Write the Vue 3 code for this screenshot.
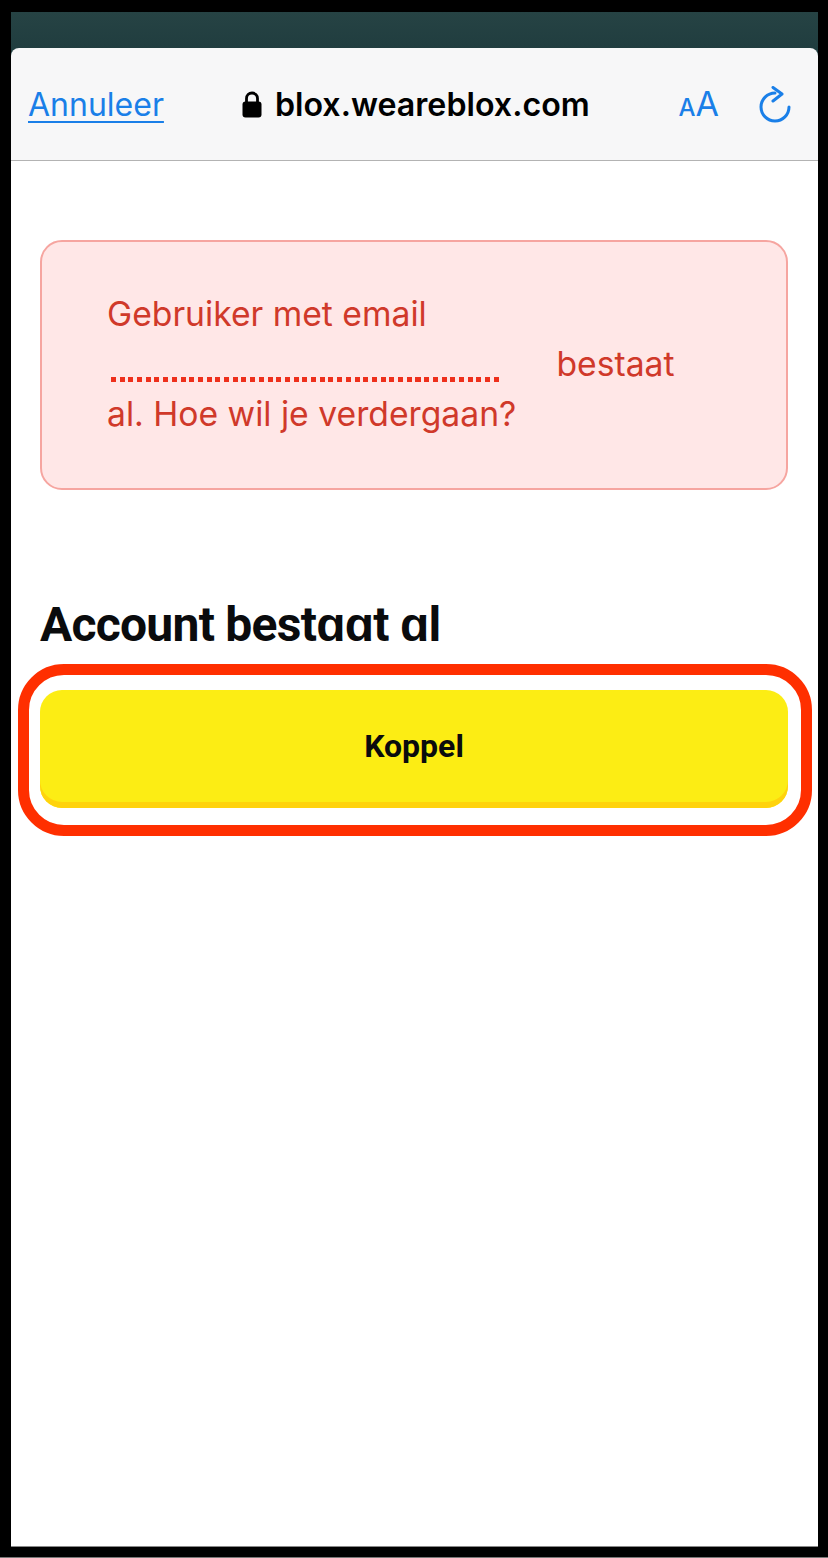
<script setup>
const title = 'Account bestɑɑt ɑl'
</script>

<template>
  <div class="device">
    <div class="sheet-top"></div>
    <header class="bar">
      <a class="cancel">Annuleer</a>
      <div class="address">
        <svg class="lock" viewBox="0 0 20 27" width="20" height="27">
          <path d="M4.5 12V7.5a5.5 5.5 0 0 1 11 0V12" fill="none" stroke="#000" stroke-width="2.8"/>
          <rect x="0.5" y="10.5" width="19" height="16" rx="3" fill="#000"/>
        </svg>
        <span>blox.weareblox.com</span>
      </div>
      <div class="tools">
        <span class="aa"><span class="small">A</span><span class="big">A</span></span>
        <svg class="reload" viewBox="0 0 32 37" width="32" height="37">
          <path d="M16 7A14 14 0 1 0 30 21" fill="none" stroke="#1a7fe8" stroke-width="3" stroke-linecap="round"/>
          <path d="M14 1.5L23 8L14 15" fill="none" stroke="#1a7fe8" stroke-width="3" stroke-linecap="round" stroke-linejoin="round"/>
        </svg>
      </div>
    </header>
    <main class="content">
      <div class="alert">
        <p>Gebruiker met email <span class="mail"></span> bestaat al. Hoe wil je verdergaan?</p>
      </div>
      <h1>{{ title }}</h1>
      <div class="action">
        <button class="koppel">Koppel</button>
        <div class="ring"></div>
      </div>
    </main>
  </div>
</template>

<style scoped>
.device {
  box-sizing: border-box;
  width: 828px;
  height: 1558px;
  background: #000;
  padding: 12px 10px 10px 11px;
  border-bottom: 1px solid #777;
  display: flex;
  flex-direction: column;
}
.sheet-top {
  height: 36px;
  background: linear-gradient(#264344, #1f3c3e);
  flex: none;
  margin-bottom: -8px;
  padding-bottom: 8px;
}
.bar {
  height: 113px;
  flex: none;
  box-sizing: border-box;
  background: #f7f7f8;
  border-bottom: 1px solid #b3b3b3;
  border-radius: 8px 8px 0 0;
  display: flex;
  align-items: center;
  position: relative;
  padding: 0 27px 0 18px;
  font-family: Inter, "Liberation Sans", sans-serif;
}
.cancel {
  color: #1a7fe8;
  font-size: 32px;
  margin-left: -1px;
  text-decoration: underline;
  text-decoration-thickness: 2px;
  text-underline-offset: 5px;
}
.address {
  display: flex;
  align-items: center;
  gap: 13px;
  margin-left: 78px;
  font-size: 32.2px;
  font-weight: 600;
  color: #000;
}
.lock { flex: none; }
.tools {
  margin-left: auto;
  display: flex;
  align-items: center;
  gap: 40px;
  color: #1a7fe8;
}
.aa { display: flex; align-items: baseline; margin-bottom: 2px; }
.small { font-size: 24px; font-weight: 500; }
.big { font-size: 34px; }
.content {
  flex: 1;
  background: #fff;
  padding: 79px 30px 0 29px;
  border-bottom: 1px solid #888;
  display: flex;
  flex-direction: column;
}
.alert {
  box-sizing: border-box;
  height: 250px;
  background: #ffe7e7;
  border: 2px solid #f6a5a0;
  border-radius: 22px;
  padding: 47px 100px 47px 65px;
}
.alert p {
  margin: 0;
  font-family: Inter, "Liberation Sans", sans-serif;
  font-size: 33.7px;
  line-height: 50px;
  color: #d0392a;
}
.mail {
  display: inline-block;
  width: 388px;
  height: 5px;
  margin: 0 48px 0 4px;
  vertical-align: -6px;
  background-image: repeating-linear-gradient(90deg, #ee2f1b 0 5px, transparent 5px 8.7px);
}
h1 {
  margin: 105px 0 0;
  font-family: Roboto, "Liberation Sans", sans-serif;
  font-size: 48px;
  line-height: 60px;
  letter-spacing: -0.75px;
  font-weight: 700;
  color: #0a0b0d;
}
.action {
  position: relative;
  margin-top: 35px;
}
.koppel {
  display: block;
  width: 100%;
  height: 118px;
  border: 0;
  border-radius: 22px;
  background: #fced14;
  box-shadow: inset 0 -6px 0 #ffd30d;
  font-family: Roboto, "Liberation Sans", sans-serif;
  font-size: 32px;
  font-weight: 700;
  color: #0a0b0d;
  padding: 0 0 6px;
}
.ring {
  position: absolute;
  left: -22px;
  right: -24px;
  top: -26px;
  bottom: -28px;
  border: 11px solid #ff2f00;
  border-radius: 46px;
  box-sizing: border-box;
  pointer-events: none;
}
</style>

<style>
html, body { margin: 0; background: #000; }
</style>
